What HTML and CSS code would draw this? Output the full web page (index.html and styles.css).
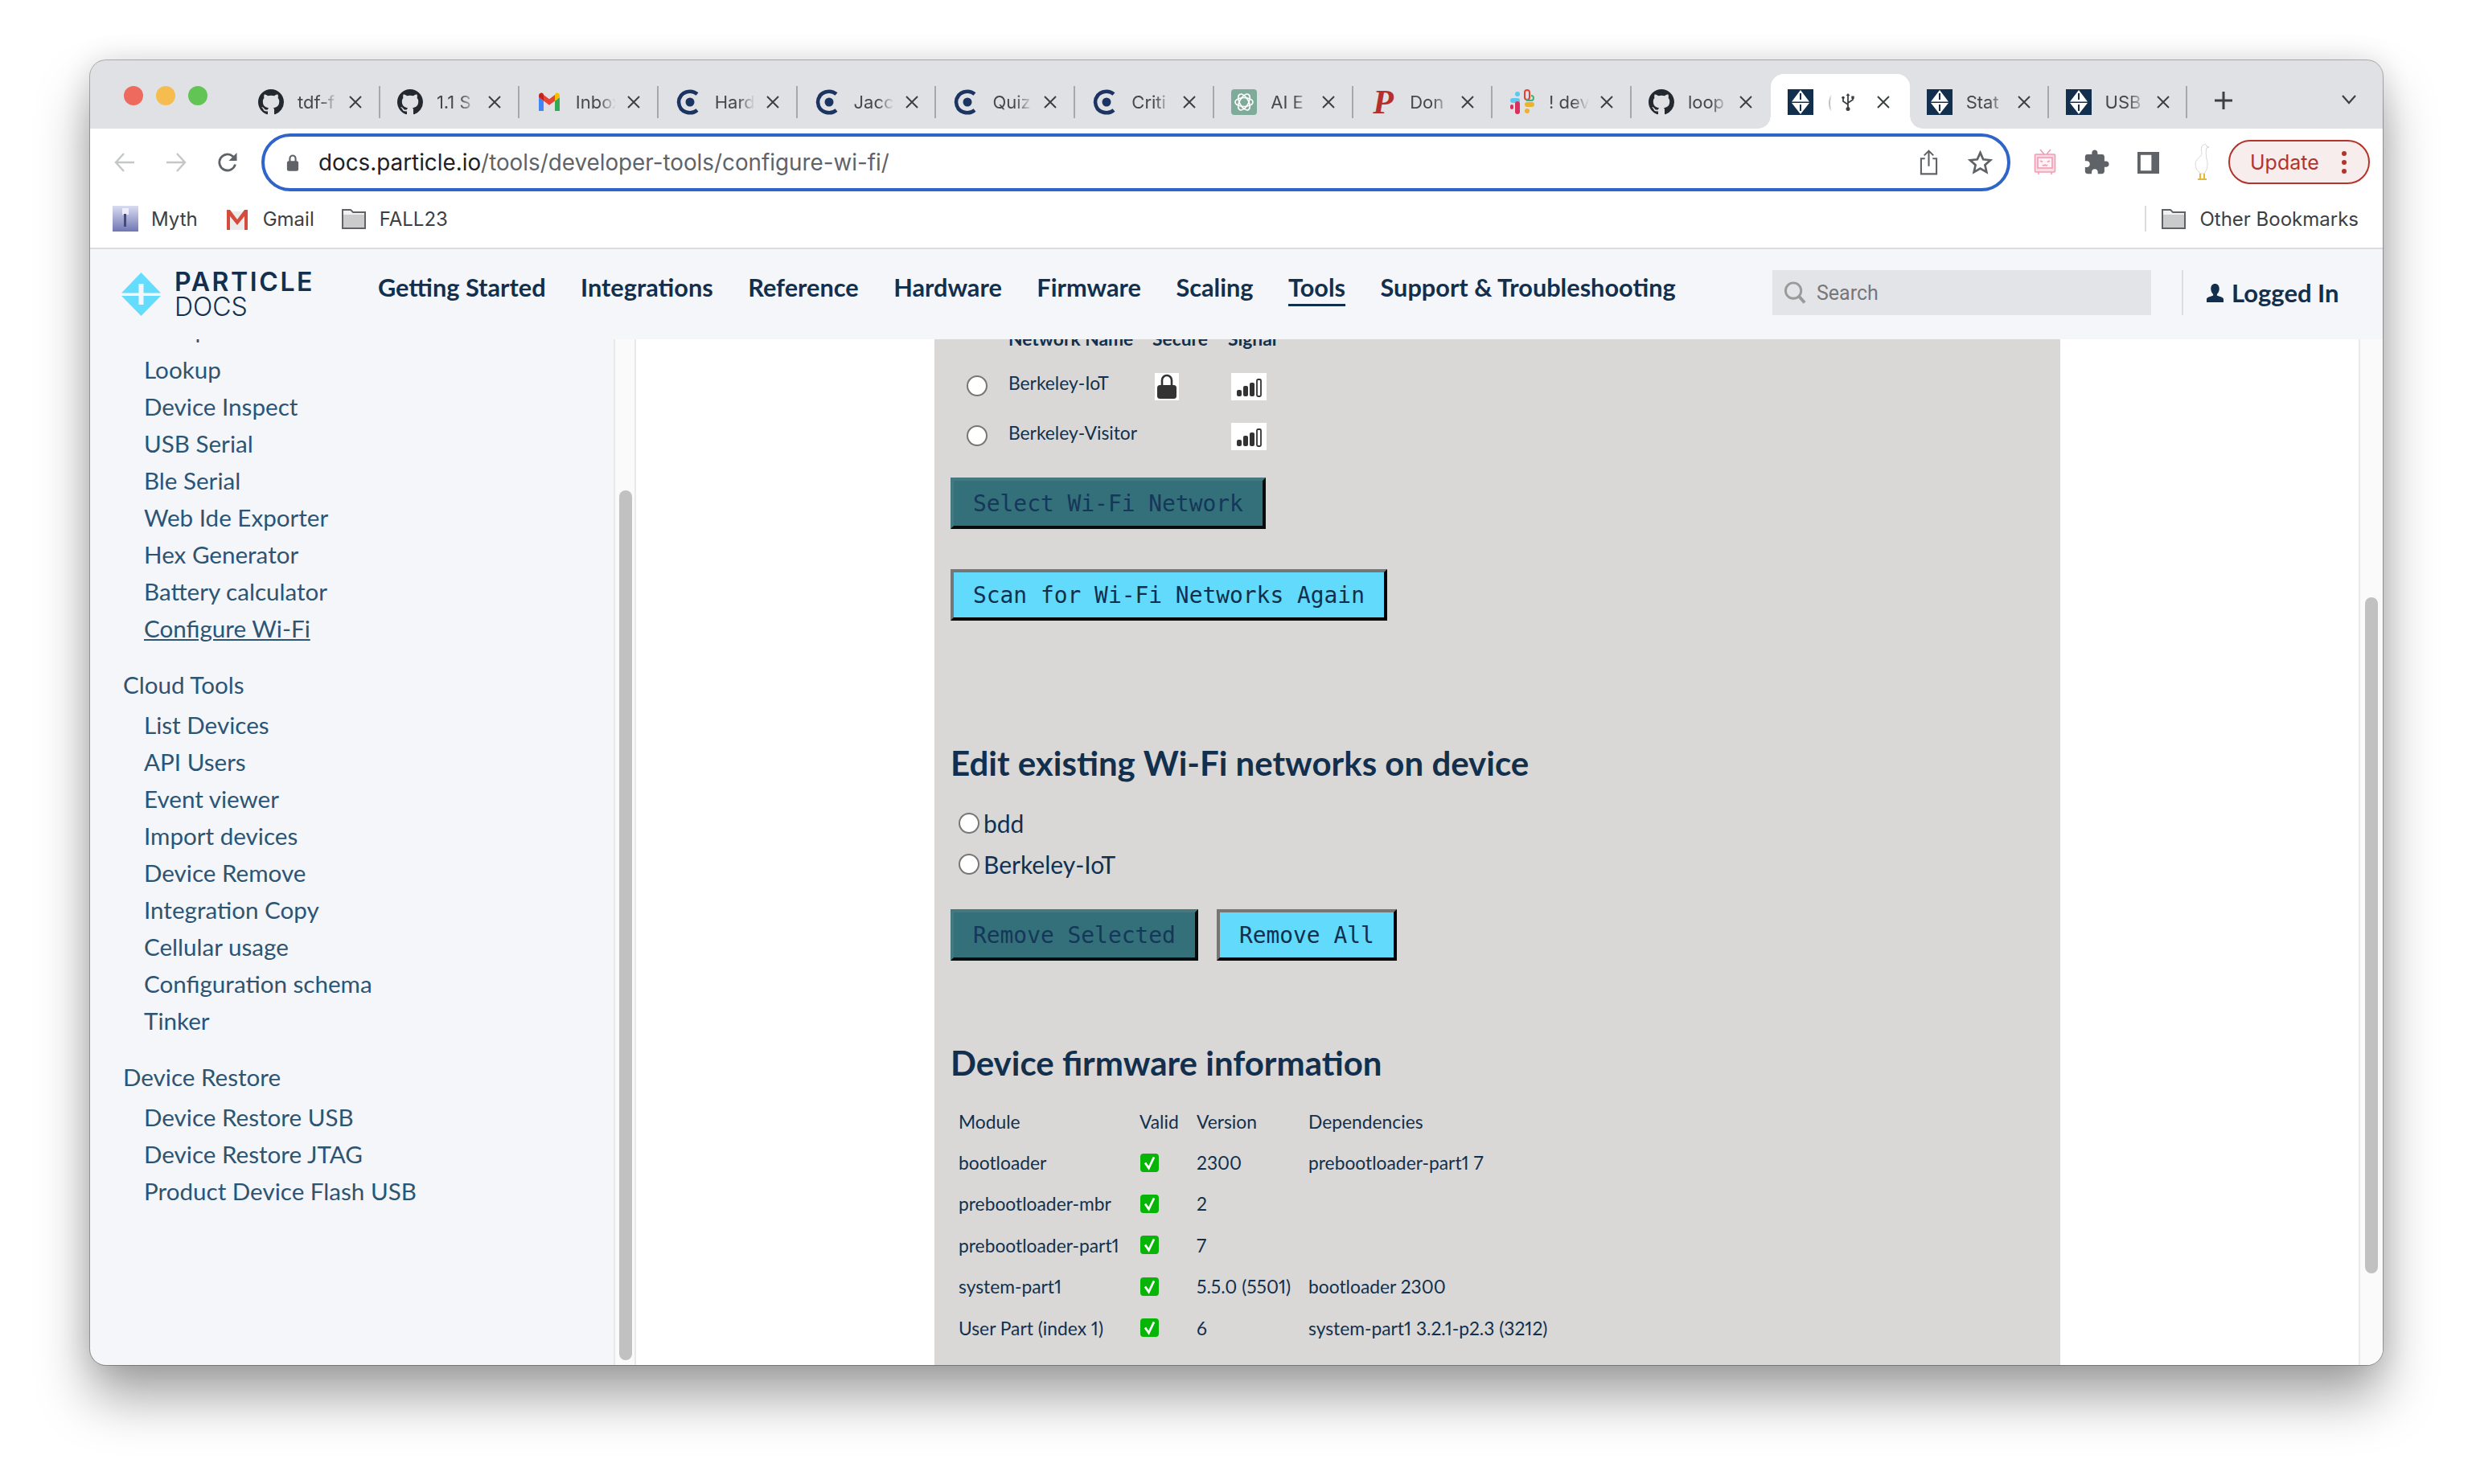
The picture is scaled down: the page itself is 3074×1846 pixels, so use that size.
FILE: index.html
```html
<!DOCTYPE html>
<html lang="en">
<head>
  <meta charset="UTF-8" />
  <title>Configure Wi-Fi | Particle Docs</title>
  <link rel="stylesheet" href="styles.css">
</head>
<body>
  <svg class="sprite" xmlns="http://www.w3.org/2000/svg">
    <symbol id="i-github" viewBox="0 0 16 16"><path fill="#24292f" d="M8 0C3.58 0 0 3.58 0 8c0 3.54 2.29 6.53 5.47 7.59.4.07.55-.17.55-.38 0-.19-.01-.82-.01-1.49-2.01.37-2.53-.49-2.69-.94-.09-.23-.48-.94-.82-1.13-.28-.15-.68-.52-.01-.53.63-.01 1.08.58 1.23.82.72 1.21 1.87.87 2.33.66.07-.52.28-.87.51-1.07-1.78-.2-3.64-.89-3.64-3.95 0-.87.31-1.59.82-2.15-.08-.2-.36-1.02.08-2.12 0 0 .67-.21 2.2.82.64-.18 1.32-.27 2-.27.68 0 1.36.09 2 .27 1.53-1.04 2.2-.82 2.2-.82.44 1.1.16 1.92.08 2.12.51.56.82 1.27.82 2.15 0 3.07-1.87 3.75-3.65 3.95.29.25.54.73.54 1.48 0 1.07-.01 1.93-.01 2.2 0 .21.15.46.55.38A8.013 8.013 0 0016 8c0-4.42-3.58-8-8-8z"/></symbol>
    <symbol id="i-gmail" viewBox="0 0 32 32"><path fill="#4285f4" d="M3 27V10l6 4.500V27z"/><path fill="#34a853" d="M23 27V14.500L29 10v17z"/><path fill="#ea4335" d="M9 14.500V7l7 5.300L23 7v7.500l-7 5.300z"/><path fill="#c5221f" d="M3 10V8c0-3 3.300-4.500 5.500-2.500L9 7v7.500z"/><path fill="#fbbc04" d="M23 14.500V7l.5-1.500C25.700 3.500 29 5 29 8v2z"/></symbol>
    <symbol id="i-coursera" viewBox="0 0 32 32"><path fill="none" stroke="#1c3461" stroke-width="4.500" d="M27 6C20 0 5 2 4 16c1 14 16 16 23 10"/><circle cx="18" cy="16" r="5.500" fill="#1c3461"/></symbol>
    <symbol id="i-particle" viewBox="0 0 32 32"><rect width="32" height="32" fill="#12304d"/><path fill="#fff" d="M16 1l11 14.500H5zM5 17h22L16 31z"/><path fill="#12304d" d="M15 5h2v8h-2zM15 19h2v8h-2z"/></symbol>
    <symbol id="i-folder" viewBox="0 0 32 32"><path fill="#cbcbcb" stroke="#5f6368" stroke-width="2" d="M2 28V5h10l3 3h15v20z"/><path fill="#f1f1f1" d="M3 6h8.500l3 3H29v2H3z"/></symbol>
    <symbol id="i-signal" viewBox="0 0 44 34"><rect width="44" height="34" fill="#fff"/><g fill="#333"><rect x="7" y="21" width="6" height="8" rx="2"/><rect x="15" y="16" width="6" height="13" rx="2"/><rect x="23" y="12" width="6" height="17" rx="2"/></g><rect x="32" y="8" width="5" height="21" rx="1.500" fill="none" stroke="#333" stroke-width="1.800"/></symbol>
    <symbol id="i-check" viewBox="0 0 23 23"><rect width="23" height="23" rx="4" fill="#06b506"/><path fill="none" stroke="#fff" stroke-width="2.800" d="M6 11.500l4.500 6.500L17 4.500"/></symbol>
    <symbol id="i-close" viewBox="0 0 16 16"><path fill="none" stroke="#3c4043" stroke-width="2" d="M1 1l14 14M15 1L1 15"/></symbol>
  </svg>

  <div class="window">
    <div class="tabstrip">
      <div class="lights"><i class="light red"></i><i class="light yellow"></i><i class="light green"></i></div>
      <div class="tab"><div class="tab-inner"><svg class="favicon"><use href="#i-github"/></svg><span class="tab-title">tdf-f</span><svg class="tab-x"><use href="#i-close"/></svg></div></div>
      <div class="tab"><div class="tab-inner"><svg class="favicon"><use href="#i-github"/></svg><span class="tab-title">1.1 S</span><svg class="tab-x"><use href="#i-close"/></svg></div></div>
      <div class="tab"><div class="tab-inner"><svg class="favicon"><use href="#i-gmail"/></svg><span class="tab-title">Inbox</span><svg class="tab-x"><use href="#i-close"/></svg></div></div>
      <div class="tab"><div class="tab-inner"><svg class="favicon"><use href="#i-coursera"/></svg><span class="tab-title">Hard</span><svg class="tab-x"><use href="#i-close"/></svg></div></div>
      <div class="tab"><div class="tab-inner"><svg class="favicon"><use href="#i-coursera"/></svg><span class="tab-title">Jacc</span><svg class="tab-x"><use href="#i-close"/></svg></div></div>
      <div class="tab"><div class="tab-inner"><svg class="favicon"><use href="#i-coursera"/></svg><span class="tab-title">Quiz</span><svg class="tab-x"><use href="#i-close"/></svg></div></div>
      <div class="tab"><div class="tab-inner"><svg class="favicon"><use href="#i-coursera"/></svg><span class="tab-title">Criti</span><svg class="tab-x"><use href="#i-close"/></svg></div></div>
      <div class="tab"><div class="tab-inner">
        <svg class="favicon" viewBox="0 0 32 32"><rect width="32" height="32" rx="4" fill="#7fab9b"/><g fill="none" stroke="#fff" stroke-width="1.600"><ellipse cx="16" cy="16" rx="11" ry="5.500"/><ellipse cx="16" cy="16" rx="11" ry="5.500" transform="rotate(60 16 16)"/><ellipse cx="16" cy="16" rx="11" ry="5.500" transform="rotate(120 16 16)"/></g></svg>
        <span class="tab-title">AI E</span><svg class="tab-x"><use href="#i-close"/></svg></div></div>
      <div class="tab"><div class="tab-inner"><span class="favicon letter-p">P</span><span class="tab-title">Don</span><svg class="tab-x"><use href="#i-close"/></svg></div></div>
      <div class="tab"><div class="tab-inner">
        <svg class="favicon" viewBox="0 0 32 32"><rect x="1" y="11" width="12" height="6" rx="3" fill="#5fc7f0"/><rect x="7" y="3" width="6" height="6" rx="3" fill="#5fc7f0"/><rect x="19" y="1" width="6" height="12" rx="3" fill="none" stroke="#e8402f" stroke-width="2"/><path d="M27 8a3 3 0 0 1 3 3 3 3 0 0 1-3 3h-5v-2" fill="none" stroke="#3cb371" stroke-width="2"/><rect x="19" y="16" width="12" height="6" rx="3" fill="#ecb22e"/><rect x="19" y="24" width="6" height="6" rx="3" fill="#ecb22e"/><rect x="7" y="15" width="6" height="16" rx="3" fill="#d9305f"/><rect x="1" y="19" width="4" height="6" rx="2" fill="#d9305f"/></svg>
        <span class="tab-title">! dev</span><svg class="tab-x"><use href="#i-close"/></svg></div></div>
      <div class="tab before-active"><div class="tab-inner"><svg class="favicon"><use href="#i-github"/></svg><span class="tab-title">loop</span><svg class="tab-x"><use href="#i-close"/></svg></div></div>
      <div class="tab active"><div class="tab-inner"><svg class="favicon"><use href="#i-particle"/></svg><span class="tab-title short">(</span>
        <svg class="usb" viewBox="0 0 18 22"><path fill="none" stroke="#3c4043" stroke-width="1.800" d="M9 2v18M3 6v4l6 4M15 5v3l-6 4"/><path fill="#3c4043" d="M9 0l2.500 3h-5z"/><circle cx="9" cy="19.500" r="2.500" fill="#3c4043"/><circle cx="3" cy="5.500" r="1.800" fill="#3c4043"/><rect x="13.300" y="3.500" width="3.400" height="3.400" fill="#3c4043"/></svg>
        <svg class="tab-x"><use href="#i-close"/></svg></div></div>
      <div class="tab"><div class="tab-inner"><svg class="favicon"><use href="#i-particle"/></svg><span class="tab-title">Stat</span><svg class="tab-x"><use href="#i-close"/></svg></div></div>
      <div class="tab"><div class="tab-inner"><svg class="favicon"><use href="#i-particle"/></svg><span class="tab-title">USB</span><svg class="tab-x"><use href="#i-close"/></svg></div></div>
      <svg class="newtab" viewBox="0 0 24 24"><path fill="none" stroke="#3c4043" stroke-width="3" d="M12 1v22M1 12h22"/></svg>
      <svg class="tabmenu" viewBox="0 0 20 12"><path fill="none" stroke="#3c4043" stroke-width="2.200" d="M2 1l8 9 8-9"/></svg>
    </div>

    <div class="toolbar">
      <div class="navbtn"><svg viewBox="0 0 28 28" class="navicon"><path fill="none" stroke="#c4c6c8" stroke-width="2.400" d="M26 14H3M13 3L3 14l10 11"/></svg></div>
      <div class="navbtn"><svg viewBox="0 0 28 28" class="navicon"><path fill="none" stroke="#c4c6c8" stroke-width="2.400" d="M2 14h23M15 3l10 11-10 11"/></svg></div>
      <div class="navbtn"><svg viewBox="0 0 28 28" class="navicon"><path fill="none" stroke="#5f6368" stroke-width="2.800" d="M23.500 16.500A10 10 0 1 1 20.500 6.500L24 10"/><path fill="#5f6368" d="M25.500 2v10h-10z"/></svg></div>
      <div class="omnibox">
        <svg class="lock" viewBox="0 0 18 24"><path fill="none" stroke="#5f6368" stroke-width="2.400" d="M5 11V6.500a4 4 0 0 1 8 0V11"/><rect x="1" y="10" width="16" height="14" rx="2.500" fill="#5f6368"/></svg>
        <span class="url"><b>docs.particle.io</b>/tools/developer-tools/configure-wi-fi/</span>
        <svg class="omni-icon share" viewBox="0 0 24 34"><path fill="none" stroke="#5f6368" stroke-width="2.200" d="M7 12H2v20h20V12h-5M12 22V2M6 8l6-6 6 6"/></svg>
        <svg class="omni-icon star" viewBox="0 0 32 32"><path fill="none" stroke="#5f6368" stroke-width="2.800" d="M16 3l3.800 8.600 9.200 1-6.900 6.200 2 9.200-8.100-4.700L7.900 28l2-9.200L3 12.600l9.200-1z"/></svg>
      </div>
      <div class="navbtn first-ext"><svg viewBox="0 0 28 34" class="ext-tv"><g fill="none" stroke="#f29bb4" stroke-width="1.600"><path d="M8 1l5 6M21 1l-5 6"/><rect x="1.500" y="7" width="25" height="22" rx="1" fill="#fbdbe4"/><rect x="5" y="11" width="18" height="13" fill="#fff3f6"/><path d="M8 15l3 1.500M20 15l-3 1.500M11 20q1.500 2 3 0q1.500 2 3 0M6 29v3M22 29v3"/></g></svg></div>
      <div class="navbtn"><svg viewBox="0 0 24 24" class="ext-puzzle"><path fill="#5f6368" d="M20.500 11H19V7c0-1.100-.9-2-2-2h-4V3.500C13 2.120 11.880 1 10.500 1S8 2.120 8 3.500V5H4c-1.100 0-1.990.9-1.990 2v3.800H3.500c1.490 0 2.700 1.210 2.700 2.700s-1.210 2.700-2.700 2.700H2V20c0 1.100.9 2 2 2h3.800v-1.500c0-1.490 1.210-2.700 2.700-2.700 1.490 0 2.700 1.210 2.700 2.700V22H17c1.100 0 2-.9 2-2v-4h1.500c1.380 0 2.500-1.120 2.500-2.500S21.880 11 20.500 11z"/></svg></div>
      <div class="navbtn"><svg viewBox="0 0 28 28" class="ext-panel"><path fill="#5f6368" d="M0 0h28v28H0z"/><path fill="#fff" d="M4 4h14v20H4z"/></svg></div>
      <div class="navbtn goose-btn"><svg viewBox="0 0 24 46" class="ext-goose"><path fill="#fff" stroke="#d5d5d5" d="M14 1c2-1 4 0 4 2l3 1-3 1c-1 4-1 8 0 14 2 6 1 13-2 16l-1 2h-5l-1-2c-5-3-6-10-4-14 3-4 7-6 7-10-1-4-1-8 2-10z"/><path fill="#e8b739" d="M9 37h2v6h2v2H7v-2h2zM14 37h2v6h2v2h-5v-2h1z"/></svg></div>
      <div class="update-pill"><span>Update</span><span class="update-dots"><i></i><i></i><i></i></span></div>
    </div>

    <div class="bookmarks">
      <div class="bookmark">
        <svg class="bm-icon" viewBox="0 0 32 32"><defs><linearGradient id="myth" x1="0" y1="0" x2="0" y2="1"><stop offset="0" stop-color="#d9dcf0"/><stop offset="1" stop-color="#7076b4"/></linearGradient></defs><rect width="32" height="32" fill="url(#myth)"/><path fill="#fff" d="M12 3h8v8h-8z" opacity=".7"/><path fill="#444a7c" d="M14 10h3v16h-3z"/></svg>
        <span>Myth</span>
      </div>
      <div class="bookmark">
        <svg class="bm-icon" viewBox="0 0 32 32"><path fill="#ececec" d="M3 7h26v23H3z"/><path fill="#d54c3f" d="M3 5h4l9 12 9-12h4v25h-4V13l-9 11-9-11v17H3z"/></svg>
        <span>Gmail</span>
      </div>
      <div class="bookmark">
        <svg class="bm-icon"><use href="#i-folder"/></svg>
        <span>FALL23</span>
      </div>
      <div class="bookmark other">
        <svg class="bm-icon"><use href="#i-folder"/></svg>
        <span>Other Bookmarks</span>
      </div>
    </div>

    <header class="site-header">
      <div class="logo">
        <svg class="logo-mark" viewBox="0 0 49 54"><path fill="#64dcfe" d="M24.500 0L49 25.500H27.500V14h-6v11.500H0zM0 29h21.500v11h6V29H49L24.500 54z"/></svg>
        <div class="logo-text"><div class="logo-top">PARTICLE</div><div class="logo-bottom">DOCS</div></div>
      </div>
      <nav class="main-nav">
        <a>Getting Started</a>
        <a>Integrations</a>
        <a>Reference</a>
        <a>Hardware</a>
        <a>Firmware</a>
        <a>Scaling</a>
        <a class="current">Tools</a>
        <a>Support &amp; Troubleshooting</a>
      </nav>
      <div class="search">
        <svg class="search-icon" viewBox="0 0 30 30"><circle cx="12.500" cy="12.500" r="10" fill="none" stroke="#9a9a9a" stroke-width="3"/><path stroke="#9a9a9a" stroke-width="4" d="M19 19l8 9"/></svg>
        <span>Search</span>
      </div>
      <div class="account">
        <svg class="person" viewBox="0 0 22 24"><path fill="#12304d" d="M11 0c3.500 0 5.500 2.500 5.500 6.500 0 3-1.500 5.500-3 7v2c3 1 8.500 2 8.500 4.500V24H0v-4c0-2.500 5.500-3.500 8.500-4.500v-2c-1.500-1.500-3-4-3-7C5.500 2.500 7.500 0 11 0z"/></svg>
        <span>Logged In</span>
      </div>
    </header>

    <div class="page">
      <aside class="sidebar">
        <div class="side-scroll">
          <ul class="side-list">
            <li>Setup</li>
            <li>Lookup</li>
            <li>Device Inspect</li>
            <li>USB Serial</li>
            <li>Ble Serial</li>
            <li>Web Ide Exporter</li>
            <li>Hex Generator</li>
            <li>Battery calculator</li>
            <li class="selected">Configure Wi-Fi</li>
          </ul>
          <div class="side-group">Cloud Tools</div>
          <ul class="side-list">
            <li>List Devices</li>
            <li>API Users</li>
            <li>Event viewer</li>
            <li>Import devices</li>
            <li>Device Remove</li>
            <li>Integration Copy</li>
            <li>Cellular usage</li>
            <li>Configuration schema</li>
            <li>Tinker</li>
          </ul>
          <div class="side-group">Device Restore</div>
          <ul class="side-list">
            <li>Device Restore USB</li>
            <li>Device Restore JTAG</li>
            <li>Product Device Flash USB</li>
          </ul>
        </div>
        <div class="scrollbar side-bar"><div class="thumb"></div></div>
      </aside>

      <main class="content">
        <section class="panel">
          <table class="networks">
            <tr><th></th><th>Network Name</th><th>Secure</th><th>Signal</th></tr>
            <tr>
              <td class="net-radio"><input class="radio" type="radio" name="net"></td>
              <td class="net-name">Berkeley-IoT</td>
              <td><span class="lock-box"><svg viewBox="0 0 30 34"><path fill="none" stroke="#333" stroke-width="2.600" d="M9 16V9a6 6 0 0 1 12 0v7"/><rect x="3" y="15" width="24" height="17" rx="3.500" fill="#333"/></svg></span></td>
              <td><svg class="signal"><use href="#i-signal"/></svg></td>
            </tr>
            <tr>
              <td class="net-radio"><input class="radio" type="radio" name="net"></td>
              <td class="net-name">Berkeley-Visitor</td>
              <td></td>
              <td><svg class="signal"><use href="#i-signal"/></svg></td>
            </tr>
          </table>

          <button class="btn disabled select-btn">Select Wi-Fi Network</button>
          <button class="btn scan-btn">Scan for Wi-Fi Networks Again</button>

          <h2 class="edit-heading">Edit existing Wi-Fi networks on device</h2>
          <label class="saved"><input class="radio" type="radio" name="saved">bdd</label>
          <label class="saved"><input class="radio" type="radio" name="saved">Berkeley-IoT</label>
          <div class="btn-row">
            <button class="btn disabled">Remove Selected</button>
            <button class="btn">Remove All</button>
          </div>

          <h2 class="fw-heading">Device firmware information</h2>
          <table class="firmware">
            <tr><td>Module</td><td>Valid</td><td>Version</td><td>Dependencies</td></tr>
            <tr><td>bootloader</td><td><svg class="check"><use href="#i-check"/></svg></td><td>2300</td><td>prebootloader-part1 7</td></tr>
            <tr><td>prebootloader-mbr</td><td><svg class="check"><use href="#i-check"/></svg></td><td>2</td><td></td></tr>
            <tr><td>prebootloader-part1</td><td><svg class="check"><use href="#i-check"/></svg></td><td>7</td><td></td></tr>
            <tr><td>system-part1</td><td><svg class="check"><use href="#i-check"/></svg></td><td>5.5.0 (5501)</td><td>bootloader 2300</td></tr>
            <tr><td>User Part (index 1)</td><td><svg class="check"><use href="#i-check"/></svg></td><td>6</td><td>system-part1 3.2.1-p2.3 (3212)</td></tr>
          </table>
        </section>
        <div class="scrollbar main-bar"><div class="thumb"></div></div>
      </main>
    </div>
  </div>
</body>
</html>
```

FILE: styles.css
```css
* {
  box-sizing: border-box;
}
html, body {
  height: 100%;
}
body {
  margin: 0;
  padding: 75px 111px 148px 112px;
  background: #fff;
  overflow: hidden;
  font-family: "Lato", "Liberation Sans", sans-serif;
  color: #12304d;
}
.sprite {
  width: 0;
  height: 0;
  position: absolute;
}
.window {
  height: 1623px;
  display: flex;
  flex-direction: column;
  border-radius: 20px;
  overflow: hidden;
  background: #fff;
}
body::before {
  content: "";
  position: absolute;
  left: 112px;
  top: 75px;
  width: 2851px;
  height: 1623px;
  border-radius: 20px;
  box-shadow: 0 0 0 1px rgba(0, 0, 0, 0.28), 0 40px 66px rgba(0, 0, 0, 0.36), 0 0 36px rgba(0, 0, 0, 0.12);
}

/* browser chrome */
.tabstrip {
  height: 85px;
  flex: none;
  display: flex;
  align-items: flex-end;
  background: #dfe1e5;
  font-family: "Inter", "Liberation Sans", sans-serif;
}
.lights {
  width: 188px;
  height: 85px;
  flex: none;
  display: flex;
  gap: 16px;
  padding: 32px 0 0 42px;
}
.light {
  width: 24px;
  height: 24px;
  border-radius: 50%;
}
.red { background: #ee6a5e; }
.yellow { background: #f5bd4f; }
.green { background: #61c454; }
.tab {
  width: 172.900px;
  height: 68px;
  flex: none;
  padding: 15px 0 13px;
  position: relative;
}
.tab-inner {
  height: 40px;
  display: flex;
  align-items: center;
  padding-left: 21px;
  border-right: 2px solid #a6a8ab;
}
.tab.before-active .tab-inner,
.tab.active .tab-inner {
  border-right: none;
}
.tab.active {
  background: #fff;
  border-radius: 16px 16px 0 0;
}
.tab.active::before,
.tab.active::after {
  content: "";
  position: absolute;
  bottom: 0;
  width: 16px;
  height: 16px;
}
.tab.active::before {
  left: -16px;
  background: radial-gradient(circle at 0 0, #dfe1e5 15.500px, #fff 16px);
}
.tab.active::after {
  right: -16px;
  background: radial-gradient(circle at 100% 0, #dfe1e5 15.500px, #fff 16px);
}
.favicon {
  width: 32px;
  height: 32px;
  flex: none;
}
.letter-p {
  font-family: "Liberation Serif", serif;
  font-style: italic;
  font-weight: 700;
  font-size: 42px;
  line-height: 32px;
  color: #b5302d;
  text-align: center;
}
.tab-title {
  width: 52px;
  margin-left: 17px;
  flex: none;
  font-size: 22px;
  color: #45484c;
  white-space: nowrap;
  overflow: hidden;
  -webkit-mask-image: linear-gradient(to right, #000 55%, transparent 96%);
  mask-image: linear-gradient(to right, #000 55%, transparent 96%);
}
.tab-title.short {
  width: 6px;
  margin-right: 11px;
  color: #bbb;
}
.usb {
  width: 18px;
  height: 22px;
  flex: none;
}
.tab-x {
  width: 16px;
  height: 16px;
  margin-left: 12px;
  flex: none;
}
.tab.active .tab-x {
  margin-left: 27px;
}
.newtab {
  width: 24px;
  height: 24px;
  margin: 0 0 23px 33px;
  flex: none;
}
.tabmenu {
  width: 20px;
  height: 12px;
  margin: 0 0 30px 134px;
  flex: none;
}

.toolbar {
  height: 78px;
  flex: none;
  display: flex;
  align-items: flex-start;
  padding: 6px 16px 0 11px;
  background: #fff;
}
.navbtn {
  width: 64px;
  height: 72px;
  flex: none;
  display: flex;
  align-items: center;
  justify-content: center;
}
.navicon {
  width: 28px;
  height: 28px;
}
.omnibox {
  flex: 1;
  height: 72px;
  margin: 0 11px 0 10px;
  display: flex;
  align-items: center;
  padding: 0 18px 0 27px;
  border: 4px solid #2f64c9;
  border-radius: 36px;
  font-family: "Inter", "Liberation Sans", sans-serif;
}
.lock {
  width: 16px;
  height: 22px;
  flex: none;
}
.url {
  margin-left: 24px;
  font-size: 27.800px;
  color: #5f6368;
  white-space: nowrap;
}
.url b {
  font-weight: 400;
  color: #202124;
}
.omni-icon {
  flex: none;
}
.share {
  width: 23px;
  height: 34px;
  margin-left: auto;
}
.star {
  width: 31px;
  height: 31px;
  margin-left: 37px;
}
.ext-tv { width: 28px; height: 34px; }
.ext-puzzle { width: 34px; height: 34px; }
.ext-panel { width: 27px; height: 27px; }
.goose-btn { margin-left: 3px; }
.ext-goose { width: 24px; height: 46px; }
.update-pill {
  width: 176px;
  height: 55px;
  margin: 8px 0 0 1px;
  flex: none;
  display: flex;
  align-items: center;
  padding-left: 25px;
  border: 2px solid #b3342a;
  border-radius: 28px;
  background: #f8eded;
  color: #b3342a;
  font-family: "Inter", "Liberation Sans", sans-serif;
  font-size: 25px;
}
.update-dots {
  margin-left: 28px;
  display: flex;
  flex-direction: column;
  gap: 5px;
}
.update-dots i {
  width: 6px;
  height: 6px;
  border-radius: 50%;
  background: #b3342a;
}

.bookmarks {
  height: 72px;
  flex: none;
  display: flex;
  align-items: center;
  gap: 33px;
  padding: 0 30px 2px 28px;
  background: #fff;
  border-bottom: 2px solid #dcdce0;
  font-family: "Inter", "Liberation Sans", sans-serif;
  font-size: 24px;
  color: #3c4043;
}
.bookmark {
  display: flex;
  align-items: center;
  gap: 16px;
}
.bm-icon {
  width: 32px;
  height: 32px;
  flex: none;
}
.bookmark.other {
  margin-left: auto;
  height: 32px;
  padding-left: 18px;
  border-left: 2px solid #dcdce0;
}

/* site header */
.site-header {
  height: 112px;
  flex: none;
  display: flex;
  align-items: center;
  padding-bottom: 4px;
  background: #f4f6fa;
}
.logo {
  width: 358px;
  flex: none;
  display: flex;
  align-items: center;
  gap: 17px;
  padding-left: 39px;
  margin-top: 4px;
}
.logo-mark {
  width: 49px;
  height: 54px;
}
.logo-text {
  font-family: "Inter", "Liberation Sans", sans-serif;
  font-size: 32px;
  line-height: 31px;
}
.logo-top {
  font-weight: 600;
  letter-spacing: 2.600px;
}
.logo-bottom {
  font-weight: 300;
}
.main-nav {
  display: flex;
  gap: 43.500px;
  font-size: 30.700px;
  font-weight: 700;
  margin-top: -14px;
}
.main-nav a.current {
  text-decoration: underline;
  text-underline-offset: 9px;
  text-decoration-thickness: 3px;
}
.search {
  width: 471px;
  height: 56px;
  margin-left: auto;
  flex: none;
  display: flex;
  align-items: center;
  gap: 12px;
  padding-left: 14px;
  background: #e3e4e8;
  color: #76777a;
  font-family: "Roboto", sans-serif;
  font-size: 25px;
}
.search-icon {
  width: 29px;
  height: 30px;
}
.account {
  width: 250px;
  height: 56px;
  margin-left: 38px;
  flex: none;
  display: flex;
  align-items: center;
  gap: 10px;
  padding-left: 29px;
  border-left: 2px solid #dcdde1;
  font-size: 31px;
  font-weight: 700;
}
.person {
  width: 21px;
  height: 23px;
}

/* page body */
.page {
  flex: 1;
  min-height: 0;
  display: flex;
}
.sidebar {
  width: 679px;
  flex: none;
  display: flex;
  background: #f4f6fa;
}
.side-scroll {
  flex: 1;
  overflow: hidden;
  padding: 0 0 0 41px;
  font-size: 29.600px;
  color: #2d5473;
}
.side-list {
  list-style: none;
  margin: 0;
  padding: 0 0 0 26px;
}
.side-list:first-child {
  margin-top: -35px;
}
.side-list li {
  height: 46px;
  line-height: 46px;
  white-space: nowrap;
}
.side-list:first-child li:first-child {
  height: 50px;
  padding-left: 5px;
}
.side-list li.selected {
  text-decoration: underline;
}
.side-group {
  height: 46px;
  line-height: 46px;
  margin: 24px 0 4px;
}
.scrollbar {
  flex: none;
  background: #fafafa;
  border-left: 2px solid #e9e9e9;
  position: relative;
}
.side-bar {
  width: 28px;
  border-right: 2px solid #e9e9e9;
}
.main-bar {
  width: 30px;
}
.thumb {
  position: absolute;
  width: 16px;
  background: #c1c1c1;
  border-radius: 8px;
}
.side-bar .thumb {
  left: 5px;
  top: 188px;
  height: 1082px;
}
.main-bar .thumb {
  left: 6px;
  top: 321px;
  height: 841px;
}
.content {
  flex: 1;
  display: flex;
  background: #fff;
  min-width: 0;
}
.panel {
  width: 1400px;
  margin-left: 371px;
  margin-right: auto;
  flex: none;
  overflow: hidden;
  padding-left: 20px;
  background: #d9d8d6;
  font-variant-numeric: proportional-nums;
}
.networks {
  margin-top: -22px;
  border-collapse: collapse;
  font-size: 22.800px;
  table-layout: fixed;
  width: 450px;
}
.networks th {
  height: 50px;
  padding: 0;
  text-align: left;
  vertical-align: top;
  line-height: 42px;
  font-weight: 700;
  white-space: nowrap;
}
.networks th:nth-child(1), .networks td:nth-child(1) { width: 72px; }
.networks th:nth-child(2), .networks td:nth-child(2) { width: 179px; }
.networks th:nth-child(3), .networks td:nth-child(3) { width: 94px; }
.networks td {
  height: 62px;
  padding: 0;
  white-space: nowrap;
}
.networks td.net-radio {
  padding-bottom: 3px;
}
.networks td.net-name {
  padding-bottom: 10px;
}
.radio {
  appearance: none;
  -webkit-appearance: none;
  width: 26px;
  height: 26px;
  margin: 0;
  border: 2px solid #767676;
  border-radius: 50%;
  background: #fff;
  vertical-align: middle;
}
.networks .radio {
  display: block;
  margin: 0 0 0 20px;
}
.lock-box {
  display: block;
  width: 30px;
  height: 34px;
  margin: 0 0 0 3px;
  background: #fff;
}
.lock-box svg {
  display: block;
  width: 30px;
  height: 34px;
}
.signal {
  display: block;
  width: 44px;
  height: 34px;
  margin: 0 0 0 4px;
}
.btn {
  display: block;
  height: 64px;
  padding: 0 24px;
  border: 4px outset #767676;
  border-color: #767676 #1f1f1f #1f1f1f #767676;
  background: #61dafb;
  color: #12304d;
  font-family: "DejaVu Sans Mono", monospace;
  font-size: 27.900px;
  white-space: nowrap;
}
.btn.disabled {
  background: #337079;
  border-color: #46787f #2a5a62 #2a5a62 #46787f;
  color: #14375a;
}
.select-btn {
  margin-top: 20px;
}
.scan-btn {
  margin-top: 50px;
}
.edit-heading, .fw-heading {
  height: 52px;
  margin: 0;
  font-size: 42px;
  line-height: 52px;
  font-weight: 700;
}
.edit-heading {
  margin-top: 151px;
}
.fw-heading {
  margin-top: 101px;
}
.saved {
  display: flex;
  align-items: center;
  gap: 5px;
  height: 51px;
  padding-left: 10px;
  font-size: 30px;
}
.edit-heading + .saved {
  margin-top: 23px;
}
.btn-row {
  display: flex;
  gap: 23px;
  margin-top: 31px;
}
.firmware {
  margin-top: 21px;
  border-collapse: collapse;
  table-layout: fixed;
  width: 900px;
  font-size: 22.800px;
}
.firmware td {
  height: 51.400px;
  padding: 0 0 0 10px;
  white-space: nowrap;
}
.firmware td:nth-child(1) { width: 225px; }
.firmware td:nth-child(2) { width: 71px; }
.firmware td:nth-child(3) { width: 139px; }
.firmware .check {
  margin-left: 1px;
}
.check {
  display: block;
  width: 23px;
  height: 23px;
}
```
